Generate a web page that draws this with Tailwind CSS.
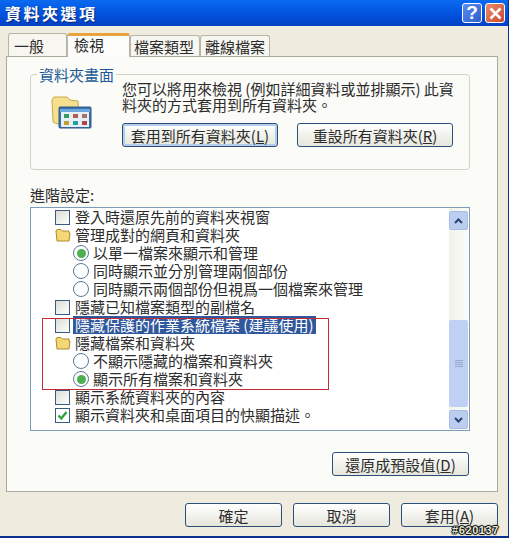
<!DOCTYPE html>
<html lang="zh-Hant">
<head>
    <meta charset="UTF-8">
    <title>資料夾選項</title>
    <script src="https://cdn.jsdelivr.net/npm/@tailwindcss/browser@4"></script>
</head>
<body class="m-0 overflow-hidden bg-[#efebde]">
<div class="relative w-[509px] h-[538px] overflow-hidden bg-[#efebde] pl-[3px] border-r border-b-2 border-[#0a2f90] font-['Noto_Sans_CJK_TC','Liberation_Sans',sans-serif] text-[#2c2c2c] text-[15px] leading-[18px]">

    <!-- Title bar -->
    <div class="-ml-[3px] h-[26px] flex items-center justify-between pl-[5px] pr-[3px] bg-gradient-to-b from-[#0a6af0] via-[#0454e0] to-[#0340c4]">
        <span class="text-white font-bold text-[16px] tracking-[2.5px] leading-none [text-shadow:1px_1px_1px_#0a2a80]">資料夾選項</span>
        <div class="flex gap-[3px]">
            <div class="w-[20px] h-[20px] rounded-[3px] border border-white bg-gradient-to-br from-[#5b8cf0] to-[#2f5fd0] text-white font-bold text-[19px] leading-[18px] text-center font-['Liberation_Sans',sans-serif]">?</div>
            <div class="w-[20px] h-[20px] rounded-[3px] border border-white bg-gradient-to-br from-[#ec8a6c] to-[#c9492a] flex items-center justify-center">
                <svg width="13" height="13" viewBox="0 0 13 13"><path d="M1.500 1.500 L11.500 11.500 M11.500 1.500 L1.500 11.500" stroke="#fff" stroke-width="2.600" fill="none"/></svg>
            </div>
        </div>
    </div>

    <!-- Tabs -->
    <div class="flex items-end h-[30px] pl-[5px] relative z-10">
        <div class="w-[59px] h-[23px] border border-b-0 border-[#b5b5a8] rounded-t-[3px] bg-[#f7f6f0] pl-[5px] text-[15px] leading-[24px]">一般</div>
        <div class="w-[63px] h-[24px] -mb-px border border-b-0 border-[#b5b5a8] border-t-[3px] border-t-[#e8a33c] rounded-t-[3px] bg-[#fcfcfa] pl-[6px] leading-[18px]">檢視</div>
        <div class="w-[70px] h-[21px] border border-b-0 border-[#b5b5a8] rounded-t-[3px] bg-[#f7f6f0] pl-[3px] text-[15px] leading-[22px]">檔案類型</div>
        <div class="w-[70px] h-[21px] border border-b-0 border-[#b5b5a8] rounded-t-[3px] bg-[#f7f6f0] pl-[4px] text-[15px] leading-[22px]">離線檔案</div>
    </div>

    <!-- Tab panel -->
    <div class="ml-[3px] w-[492px] h-[436px] border border-[#a9a99c] bg-[#fbfbf8] pt-[17px] pl-[23px]">

        <!-- Folder views group -->
        <div class="relative w-[440px] h-[96px] border border-[#d4d2c4] rounded-[4px]">
            <span class="absolute left-[6px] -top-[9px] px-[2px] bg-[#fbfbf8] text-[#1b5a96] text-[15px] leading-[17px]">資料夾畫面</span>
            <div class="flex pl-[20px] pt-[6px]">
                <svg class="mt-[15px] shrink-0" width="42" height="34" viewBox="0 0 42 34">
                    <path d="M1 4 L3 1 L16 1 L19 4 L27 5 L28 22 L6 28 L2 26 Z" fill="#f6e08e" stroke="#c8a850"/>
                    <rect x="8" y="11" width="32" height="21" rx="1" fill="#3c70a8" stroke="#2e5a88"/>
                    <rect x="9" y="13" width="30" height="3" fill="#6aa8e0"/>
                    <rect x="10" y="16" width="28" height="15" fill="#e6eef6"/>
                    <rect x="13" y="18" width="5" height="4" fill="#3a9a5a"/>
                    <rect x="22" y="18" width="5" height="4" fill="#b85a50"/>
                    <rect x="31" y="18" width="5" height="4" fill="#a87060"/>
                    <rect x="13" y="25" width="5" height="4" fill="#c0a030"/>
                    <rect x="22" y="25" width="5" height="4" fill="#20a0a0"/>
                    <rect x="31" y="25" width="5" height="4" fill="#b04840"/>
                </svg>
                <div class="ml-[29px]">
                    <p class="w-[336px] text-[15px] leading-[16px]">您可以將用來檢視 (例如詳細資料或並排顯示) 此資料夾的方式套用到所有資料夾。</p>
                    <div class="flex gap-[19px] mt-[10px]">
                        <button class="w-[156px] h-[24px] rounded-[3px] border border-[#2b4f78] bg-gradient-to-b from-white to-[#e6e6dc] shadow-[inset_0_0_0_2px_#b4cdea] text-[15px] leading-none">套用到所有資料夾(<span class="underline">L</span>)</button>
                        <button class="w-[156px] h-[24px] rounded-[3px] border border-[#2b4f78] bg-gradient-to-b from-white to-[#e6e6dc] text-[15px] leading-none">重設所有資料夾(<span class="underline">R</span>)</button>
                    </div>
                </div>
            </div>
        </div>

        <!-- Advanced settings -->
        <p class="mt-[16px] text-[15px] leading-[18px]">進階設定:</p>
        <div class="relative mt-[3px] w-[440px] h-[224px] border border-[#7f9db9] bg-white flex">
            <div class="flex-1 pl-[24px] text-[15px] leading-[18px]">
                <div class="flex items-center h-[18px]"><span class="w-[15px] h-[15px] border border-[#3a5a80] bg-gradient-to-br from-[#dcdcd4] to-white"></span><span class="ml-[5px]">登入時還原先前的資料夾視窗</span></div>
                <div class="flex items-center h-[18px]"><svg width="16" height="14" viewBox="0 0 16 14"><path d="M1 3 L2 1.500 L6 1.500 L7.500 3 L14 3 L14 5 L15 5 L14 13 L2 13 Z" fill="#f4d878" stroke="#b08a2c"/></svg><span class="ml-[4px]">管理成對的網頁和資料夾</span></div>
                <div class="flex items-center h-[18px] pl-[18px]"><span class="w-[16px] h-[16px] rounded-full border border-[#5a7a9a] bg-white flex items-center justify-center"><span class="w-[9px] h-[9px] rounded-full bg-[#4cb050]"></span></span><span class="ml-[4px]">以單一檔案來顯示和管理</span></div>
                <div class="flex items-center h-[18px] pl-[18px]"><span class="w-[16px] h-[16px] rounded-full border border-[#5a7a9a] bg-white"></span><span class="ml-[4px]">同時顯示並分別管理兩個部份</span></div>
                <div class="flex items-center h-[18px] pl-[18px]"><span class="w-[16px] h-[16px] rounded-full border border-[#5a7a9a] bg-white"></span><span class="ml-[4px]">同時顯示兩個部份但視爲一個檔案來管理</span></div>
                <div class="flex items-center h-[18px]"><span class="w-[15px] h-[15px] border border-[#3a5a80] bg-gradient-to-br from-[#dcdcd4] to-white"></span><span class="ml-[5px]">隱藏已知檔案類型的副檔名</span></div>
                <div class="flex items-center h-[18px]"><span class="w-[15px] h-[15px] border border-[#3a5a80] bg-gradient-to-br from-[#dcdcd4] to-white"></span><span class="ml-[3px] px-[2px] bg-[#30589c] text-white">隱藏保護的作業系統檔案 (建議使用)</span></div>
                <div class="flex items-center h-[18px]"><svg width="16" height="14" viewBox="0 0 16 14"><path d="M1 3 L2 1.500 L6 1.500 L7.500 3 L14 3 L14 5 L15 5 L14 13 L2 13 Z" fill="#f4d878" stroke="#b08a2c"/></svg><span class="ml-[4px]">隱藏檔案和資料夾</span></div>
                <div class="flex items-center h-[18px] pl-[18px]"><span class="w-[16px] h-[16px] rounded-full border border-[#5a7a9a] bg-white"></span><span class="ml-[4px]">不顯示隱藏的檔案和資料夾</span></div>
                <div class="flex items-center h-[18px] pl-[18px]"><span class="w-[16px] h-[16px] rounded-full border border-[#5a7a9a] bg-white flex items-center justify-center"><span class="w-[9px] h-[9px] rounded-full bg-[#4cb050]"></span></span><span class="ml-[4px]">顯示所有檔案和資料夾</span></div>
                <div class="flex items-center h-[18px]"><span class="w-[15px] h-[15px] border border-[#3a5a80] bg-gradient-to-br from-[#dcdcd4] to-white"></span><span class="ml-[5px]">顯示系統資料夾的內容</span></div>
                <div class="flex items-center h-[18px]"><span class="w-[15px] h-[15px] border border-[#3a5a80] bg-white flex items-center justify-center"><svg width="11" height="11" viewBox="0 0 11 11"><path d="M1.500 5.500 L4.300 8.500 L9.500 2" stroke="#2fa53a" stroke-width="2.400" fill="none"/></svg></span><span class="ml-[5px]">顯示資料夾和桌面項目的快顯描述。</span></div>
            </div>

            <!-- Scrollbar -->
            <div class="w-[19px] mr-px flex flex-col bg-gradient-to-r from-[#f2f1ea] to-[#fbfbf8]">
                <div class="h-[19px] mt-[3px] rounded-[2px] border border-[#a8bce0] bg-[#bccdf2] flex items-center justify-center"><svg width="9" height="6" viewBox="0 0 9 6"><path d="M1 5 L4.500 1.500 L8 5" stroke="#28456e" stroke-width="2" fill="none"/></svg></div>
                <div class="flex-1"></div>
                <div class="h-[87px] rounded-[2px] bg-[#bfd0f4] flex flex-col items-center justify-center gap-px">
                    <span class="w-[8px] h-px bg-[#94a8d0]"></span><span class="w-[8px] h-px bg-[#94a8d0]"></span><span class="w-[8px] h-px bg-[#94a8d0]"></span><span class="w-[8px] h-px bg-[#94a8d0]"></span>
                </div>
                <div class="h-[19px] mt-[3px] mb-px rounded-[2px] border border-[#a8bce0] bg-[#bccdf2] flex items-center justify-center"><svg width="9" height="6" viewBox="0 0 9 6"><path d="M1 1 L4.500 4.500 L8 1" stroke="#28456e" stroke-width="2" fill="none"/></svg></div>
            </div>
        </div>

        <div class="w-[439px] flex justify-end mt-[21px]">
            <button class="w-[137px] h-[24px] rounded-[3px] border border-[#2b4f78] bg-gradient-to-b from-white to-[#e6e6dc] text-[15px] leading-none">還原成預設值(<span class="underline">D</span>)</button>
        </div>
    </div>

    <!-- Dialog buttons -->
    <div class="flex gap-[11px] pl-[182px] mt-[11px]">
        <button class="w-[97px] h-[24px] rounded-[3px] border border-[#2b4f78] bg-gradient-to-b from-white to-[#e6e6dc] text-[15px] leading-none">確定</button>
        <button class="w-[97px] h-[24px] rounded-[3px] border border-[#2b4f78] bg-gradient-to-b from-white to-[#e6e6dc] text-[15px] leading-none">取消</button>
        <button class="w-[97px] h-[24px] rounded-[3px] border border-[#2b4f78] bg-gradient-to-b from-white to-[#e6e6dc] text-[15px] leading-none">套用(<span class="underline">A</span>)</button>
    </div>

    <!-- Red annotation box -->
    <div class="absolute left-[42px] top-[318px] w-[287px] h-[72px] border border-[#c22a38]"></div>

    <!-- Watermark -->
    <span class="absolute left-[452px] top-[524px] text-[11px] leading-[12px] tracking-[0.6px] font-bold text-[#e8e8d8] font-['Liberation_Sans',sans-serif] [text-shadow:0_0_1px_#000,1px_0_1px_#000,-1px_0_1px_#000,0_1px_1px_#000,0_-1px_1px_#000]">#620137</span>
</div>
</body>
</html>
